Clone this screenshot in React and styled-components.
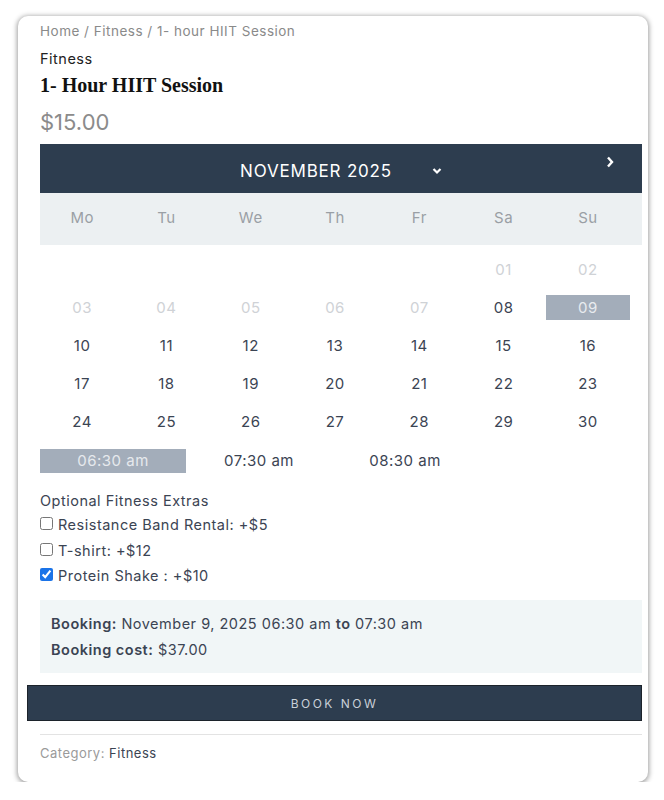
import styled, { createGlobalStyle } from "styled-components";

const GlobalStyle = createGlobalStyle`
  html, body {
    margin: 0;
    padding: 0;
    background: #ffffff;
    font-family: Inter, "Noto Sans", sans-serif;
  }
`;

const weekDays = ["Mo", "Tu", "We", "Th", "Fr", "Sa", "Su"];

const days = [
  [null, null, null, null, null, { n: "01", off: true }, { n: "02", off: true }],
  [
    { n: "03", off: true },
    { n: "04", off: true },
    { n: "05", off: true },
    { n: "06", off: true },
    { n: "07", off: true },
    { n: "08" },
    { n: "09", sel: true },
  ],
  ["10", "11", "12", "13", "14", "15", "16"].map((n) => ({ n })),
  ["17", "18", "19", "20", "21", "22", "23"].map((n) => ({ n })),
  ["24", "25", "26", "27", "28", "29", "30"].map((n) => ({ n })),
];

const slots = [
  { t: "06:30 am", sel: true },
  { t: "07:30 am" },
  { t: "08:30 am" },
];

const extras = [
  { label: "Resistance Band Rental: +$5", checked: false },
  { label: "T-shirt: +$12", checked: false },
  { label: "Protein Shake : +$10", checked: true },
];

function App() {
  return (
    <>
      <GlobalStyle />
      <Card>
        <Breadcrumb>Home / Fitness / 1- hour HIIT Session</Breadcrumb>
        <Category>Fitness</Category>
        <Title>1- Hour HIIT Session</Title>
        <Price>$15.00</Price>

        <Calendar>
          <MonthBar>
            <MonthLabel>
              NOVEMBER 2025
              <svg width="10" height="8" viewBox="0 0 10 8">
                <path d="M1.5 2 L5 5.5 L8.5 2" fill="none" stroke="#fff" strokeWidth="2.2" />
              </svg>
            </MonthLabel>
            <NextArrow>
              <svg width="8" height="12" viewBox="0 0 8 12">
                <path d="M2 1.5 L6 6 L2 10.5" fill="none" stroke="#fff" strokeWidth="2.4" />
              </svg>
            </NextArrow>
          </MonthBar>
          <WeekRow>
            {weekDays.map((d) => (
              <WeekDay key={d}>{d}</WeekDay>
            ))}
          </WeekRow>
          <DayGrid>
            {days.flat().map((d, i) => (
              <DayCell key={i}>
                {d && (
                  <DayNum $off={d.off} $sel={d.sel}>
                    {d.n}
                  </DayNum>
                )}
              </DayCell>
            ))}
          </DayGrid>
        </Calendar>

        <SlotRow>
          {slots.map((s) => (
            <Slot key={s.t} $sel={s.sel}>
              {s.t}
            </Slot>
          ))}
        </SlotRow>

        <ExtrasTitle>Optional Fitness Extras</ExtrasTitle>
        {extras.map((e) => (
          <Extra key={e.label}>
            <input type="checkbox" defaultChecked={e.checked} />
            {e.label}
          </Extra>
        ))}

        <Summary>
          <SummaryLine>
            <b>Booking:</b> November 9, 2025 06:30 am <b>to</b> 07:30 am
          </SummaryLine>
          <SummaryLine>
            <b>Booking cost:</b> $37.00
          </SummaryLine>
        </Summary>

        <BookButton>BOOK NOW</BookButton>
        <Divider />
        <Meta>
          <span>Category: </span>
          <MetaLink>Fitness</MetaLink>
        </Meta>
      </Card>
    </>
  );
}

const Card = styled.div`
  box-sizing: border-box;
  width: 630px;
  margin: 16px 0 0 18px;
  padding: 5px 6px 19px 22px;
  background: #fff;
  border-radius: 10px;
  box-shadow: 0 1px 5px 1px rgba(0, 0, 0, 0.38);
  color: #3b4453;
  letter-spacing: 0.5px;
`;

const Breadcrumb = styled.div`
  font-size: 13.5px;
  line-height: 20px;
  color: #8a8a8a;
`;

const Category = styled.div`
  margin-top: 8px;
  font-size: 14.5px;
  line-height: 20px;
  color: #222;
`;

const Title = styled.h1`
  margin: 3px 0 0;
  font-family: "Liberation Serif", serif;
  font-weight: bold;
  font-size: 20px;
  line-height: 26px;
  letter-spacing: 0;
  color: #111;
`;

const Price = styled.div`
  margin-top: 9px;
  font-size: 22px;
  line-height: 30px;
  letter-spacing: 0;
  color: #8b8b8b;
`;

const Calendar = styled.div`
  margin-top: 7px;
`;

const MonthBar = styled.div`
  position: relative;
  height: 49px;
  background: #2d3d4f;
  display: flex;
  align-items: center;
  justify-content: center;
`;

const MonthLabel = styled.div`
  display: flex;
  align-items: center;
  gap: 40px;
  margin-left: 0;
  margin-top: 5px;
  font-size: 17px;
  letter-spacing: 0.8px;
  color: #fff;
`;

const NextArrow = styled.div`
  position: absolute;
  right: 28px;
  top: 12px;
  display: flex;
`;

const WeekRow = styled.div`
  display: grid;
  grid-template-columns: repeat(7, 84.3px);
  height: 52px;
  padding-bottom: 3px;
  box-sizing: border-box;
  background: #ecf0f2;
  align-items: center;
`;

const WeekDay = styled.div`
  text-align: center;
  font-size: 15px;
  color: #9a9fa5;
`;

const DayGrid = styled.div`
  display: grid;
  grid-template-columns: repeat(7, 84.3px);
  grid-auto-rows: 38.2px;
  margin-top: 5px;
`;

const DayCell = styled.div`
  display: flex;
  align-items: center;
`;

const DayNum = styled.div`
  width: 100%;
  height: 25px;
  line-height: 25px;
  text-align: center;
  font-size: 15px;
  color: ${(p) => (p.$sel ? "#e8ebef" : p.$off ? "#cfd2d6" : "#3b4453")};
  background: ${(p) => (p.$sel ? "#a3adba" : "transparent")};
`;

const SlotRow = styled.div`
  display: flex;
  margin-top: 8px;
`;

const Slot = styled.div`
  width: 146px;
  height: 24px;
  line-height: 24px;
  text-align: center;
  font-size: 15px;
  color: ${(p) => (p.$sel ? "#e6e9ed" : "#3b4453")};
  background: ${(p) => (p.$sel ? "#a3adba" : "transparent")};
`;

const ExtrasTitle = styled.div`
  margin-top: 17px;
  font-size: 14.5px;
  line-height: 22px;
  color: #3b4453;
`;

const Extra = styled.label`
  display: flex;
  align-items: center;
  height: 25.5px;
  font-size: 14.5px;
  color: #3b4453;

  input {
    margin: -2px 5px 0 0;
    width: 13px;
    height: 13px;
    accent-color: #1a73e8;
  }
`;

const Summary = styled.div`
  margin-top: 12px;
  padding: 11px 11px 10px;
  background: #f1f6f7;
`;

const SummaryLine = styled.div`
  font-size: 14.5px;
  line-height: 26px;
  color: #3b4453;

  b {
    font-weight: 600;
  }
`;

const BookButton = styled.button`
  display: block;
  box-sizing: border-box;
  width: calc(100% + 13px);
  margin: 12px 0 0 -13px;
  height: 36px;
  background: #2d3d4f;
  border: 1px solid #1c232b;
  color: #c9d0d8;
  font-family: inherit;
  font-size: 12px;
  letter-spacing: 2.5px;
  cursor: pointer;
`;

const Divider = styled.hr`
  margin: 13px 0 0;
  border: none;
  height: 1px;
  background: #e3e3e3;
`;

const Meta = styled.div`
  margin-top: 8px;
  font-size: 13px;
  line-height: 20px;
  color: #9a9a9a;
`;

const MetaLink = styled.span`
  color: #3b4453;
`;

export default App;
